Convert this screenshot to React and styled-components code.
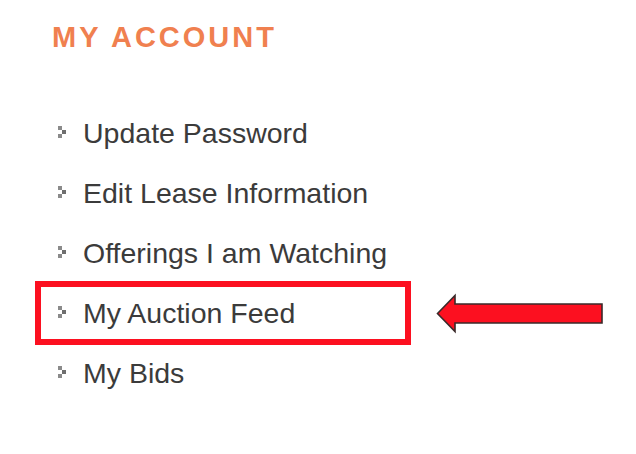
import React from "react";
import styled, { createGlobalStyle } from "styled-components";

const Global = createGlobalStyle`
  html, body { margin: 0; padding: 0; background: #ffffff; }
  body { font-family: "Liberation Sans", Arial, Helvetica, sans-serif; }
`;

const Page = styled.div`
  width: 636px;
  height: 454px;
  box-sizing: border-box;
  padding-top: 23px;
  overflow: hidden;
`;

const Title = styled.h2`
  margin: 0 0 0 52px;
  font-size: 29px;
  line-height: 29px;
  font-weight: 700;
  letter-spacing: 3px;
  color: #f0804f;
`;

const List = styled.ul`
  list-style: none;
  margin: 51px 0 0 37px;
  padding: 0;
  display: flex;
  flex-direction: column;
`;

const Row = styled.li`
  display: flex;
  align-items: center;
  height: 60px;
`;

const Item = styled.a`
  box-sizing: border-box;
  width: 372px;
  height: 60px;
  display: flex;
  align-items: center;
  gap: 17px;
  padding-left: 21px;
  font-size: 28.5px;
  line-height: 28px;
  color: #3b3b3b;
  text-decoration: none;
  outline: ${(p) => (p.$highlight ? "6px solid #fc1020" : "none")};
  outline-offset: -4px;
`;

const Bullet = styled.svg`
  flex: none;
  width: 8px;
  height: 12px;
  margin-top: -3px;
`;

const ArrowSvg = styled.svg`
  flex: none;
  width: 168px;
  height: 41px;
  margin-left: 27px;
`;

const items = [
  "Update Password",
  "Edit Lease Information",
  "Offerings I am Watching",
  "My Auction Feed",
  "My Bids",
];

function BulletIcon() {
  return (
    <Bullet viewBox="0 0 8 12">
      <rect x="0" y="0" width="4" height="4" fill="#8a8a8a" />
      <rect x="4" y="4" width="4" height="4" fill="#6e6e6e" />
      <rect x="0" y="8" width="4" height="4" fill="#8a8a8a" />
    </Bullet>
  );
}

function Arrow() {
  return (
    <ArrowSvg viewBox="0 0 168 41">
      <path
        d="M1.5 20.5 L19 2.5 L19 11 L166 11 L166 30 L19 30 L19 38.5 Z"
        fill="#fc1020"
        stroke="#3a2a2a"
        strokeWidth="1.6"
        strokeLinejoin="miter"
      />
    </ArrowSvg>
  );
}

export default function App() {
  return (
    <Page>
      <Global />
      <Title>MY ACCOUNT</Title>
      <List>
        {items.map((label, i) => {
          const hl = label === "My Auction Feed";
          return (
            <Row key={i}>
              <Item href="#" $highlight={hl}>
                <BulletIcon />
                {label}
              </Item>
              {hl && <Arrow />}
            </Row>
          );
        })}
      </List>
    </Page>
  );
}
